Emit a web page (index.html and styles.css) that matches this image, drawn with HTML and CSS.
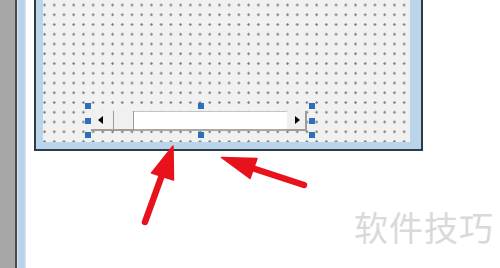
FILE: index.html
```html
<!DOCTYPE html>
<html lang="zh">
<head>
<meta charset="utf-8">
<link rel="stylesheet" href="styles.css">
</head>
<body>
<div class="page">
  <div class="strip-gray"></div>
  <div class="strip-dark"></div>
  <div class="strip-blue"></div>
  <div class="gap"></div>
  <div class="form">
    <div class="frame">
      <div class="canvas">
        <div class="scrollbar">
          <div class="btn btn-left"><span class="tri-left"></span></div>
          <div class="thumb"></div>
          <div class="track"></div>
          <div class="btn btn-right"><span class="tri-right"></span></div>
          <span class="handle h-tl"></span>
          <span class="handle h-tm"></span>
          <span class="handle h-tr"></span>
          <span class="handle h-ml"></span>
          <span class="handle h-mr"></span>
          <span class="handle h-bl"></span>
          <span class="handle h-bm"></span>
          <span class="handle h-br"></span>
        </div>
      </div>
    </div>
  </div>
  <svg class="arrows" width="500" height="268" viewBox="0 0 500 268">
    <g fill="#e8121c" stroke="#e8121c" stroke-linejoin="round" stroke-linecap="round">
      <line x1="145" y1="222" x2="162" y2="175" stroke-width="6.5"/>
      <polygon points="173,146 151.5,173 173.5,180" stroke-width="1.5"/>
      <line x1="304" y1="185" x2="252" y2="168" stroke-width="6.5"/>
      <polygon points="221.5,157.5 257,158.5 250,178.5" stroke-width="1.5"/>
    </g>
  </svg>
  <div class="watermark">软件技巧</div>
</div>
</body>
</html>
```
FILE: styles.css
```css
html, body {
  margin: 0;
  padding: 0;
  background: #ffffff;
}
.page {
  position: relative;
  width: 500px;
  height: 268px;
  display: flex;
  align-items: flex-start;
  overflow: hidden;
  font-family: "Noto Sans CJK SC", "Noto Sans", sans-serif;
}
.strip-gray {
  width: 15px;
  height: 268px;
  background: #a7a7a7;
}
.strip-dark {
  width: 2px;
  height: 268px;
  background: #4a4a4a;
}
.strip-blue {
  width: 9px;
  height: 268px;
  background: linear-gradient(to right, #d6e6f5 0, #b9d2ea 2px, #b9d2ea 7px, #d9e8f6 9px);
}
.gap {
  width: 8px;
  height: 268px;
}
.form {
  width: 385px;
  border-left: 2px solid #2d3d48;
  border-right: 2px solid #2d3d48;
  border-bottom: 2px solid #2d3d48;
}
.frame {
  padding: 0 11px 7px 7px;
  background: #bad4ec;
}
.canvas {
  width: 319px;
  height: 31px;
  padding: 111px 0 0 48px;
  background-color: #f1f1f1;
  background-image: radial-gradient(circle at 1.5px 1.5px, #7e7e7e 0.9px, rgba(126,126,126,0) 1.5px);
  background-size: 9.72px 9.75px;
  background-position: 0px 3.5px;
}
.scrollbar {
  position: relative;
  display: flex;
  width: 216px;
  height: 20px;
}
.btn {
  display: flex;
  align-items: center;
  justify-content: center;
  background: #f0f0f0;
  border-right: 1.5px solid #9c9c9c;
  border-bottom: 2px solid #9c9c9c;
  box-sizing: border-box;
  height: 20px;
}
.btn-left {
  width: 23px;
  padding-right: 3px;
}
.btn-right {
  width: 20px;
  padding-left: 3px;
  border-right-width: 2px;
}
.thumb {
  width: 20px;
  height: 20px;
  box-sizing: border-box;
  background: #f0f0f0;
  border-right: 1.5px solid #9c9c9c;
  border-bottom: 2px solid #9c9c9c;
}
.track {
  flex: 1;
  height: 20px;
  box-sizing: border-box;
  background: #ffffff;
  border-top: 1.5px solid #c4c4c4;
  border-bottom: 2px solid #a8a8a8;
}
.tri-left {
  width: 0;
  height: 0;
  border-top: 4px solid transparent;
  border-bottom: 4px solid transparent;
  border-right: 5px solid #000000;
}
.tri-right {
  width: 0;
  height: 0;
  border-top: 4px solid transparent;
  border-bottom: 4px solid transparent;
  border-left: 5px solid #000000;
}
.handle {
  position: absolute;
  width: 6px;
  height: 6px;
  background: #2a72b6;
}
.h-tl { left: -6px; top: -8px; }
.h-tm { left: 107px; top: -8px; }
.h-tr { left: 218px; top: -8px; }
.h-ml { left: -6px; top: 7px; }
.h-mr { left: 218px; top: 7px; }
.h-bl { left: -6px; top: 21px; }
.h-bm { left: 107px; top: 21px; }
.h-br { left: 218px; top: 21px; }
.arrows {
  position: absolute;
  left: 0;
  top: 0;
}
.watermark {
  position: absolute;
  left: 354px;
  top: 207px;
  font-size: 34px;
  line-height: 40px;
  letter-spacing: 1px;
  color: #d9d9d9;
  white-space: nowrap;
}
```
